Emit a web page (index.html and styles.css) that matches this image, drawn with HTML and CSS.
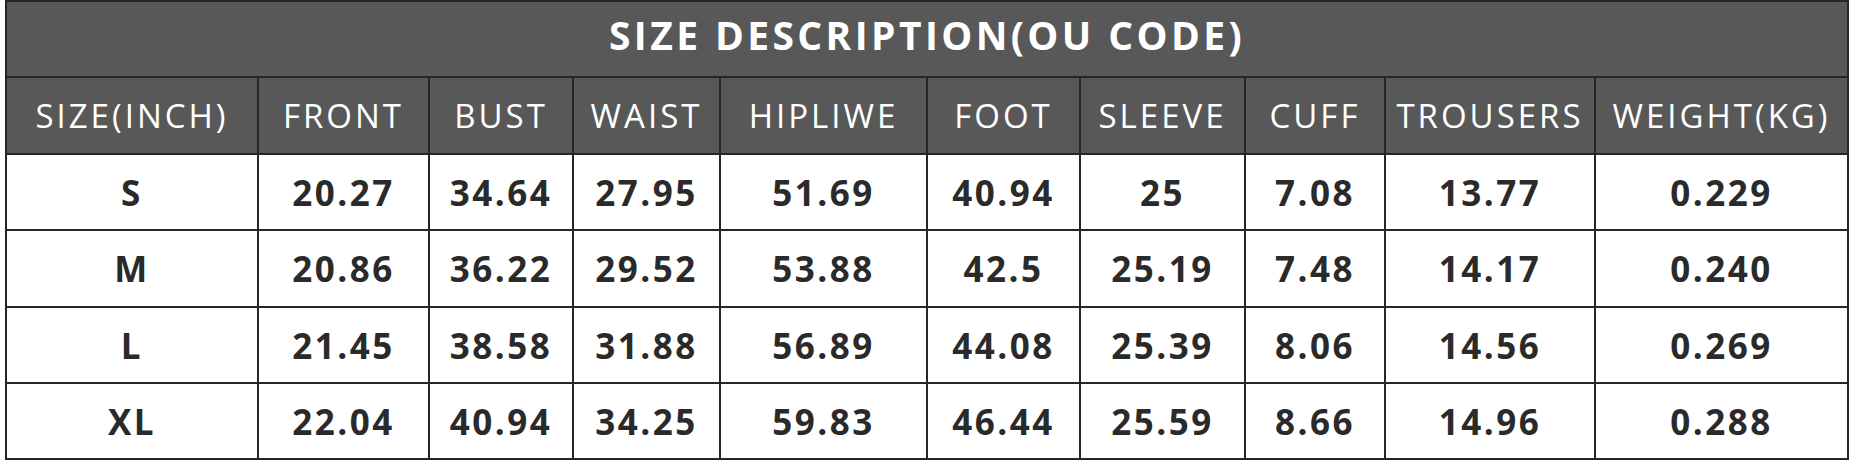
FILE: index.html
```html
<!DOCTYPE html>
<html lang="en">
<head>
<meta charset="utf-8">
<title>Size Description</title>
<link rel="stylesheet" href="styles.css">
</head>
<body>
<div class="chart">
  <div class="title">SIZE DESCRIPTION(OU CODE)</div>

  <div class="hd">SIZE(INCH)</div>
  <div class="hd">FRONT</div>
  <div class="hd">BUST</div>
  <div class="hd">WAIST</div>
  <div class="hd">HIPLIWE</div>
  <div class="hd">FOOT</div>
  <div class="hd">SLEEVE</div>
  <div class="hd">CUFF</div>
  <div class="hd">TROUSERS</div>
  <div class="hd">WEIGHT(KG)</div>

  <div class="cell">S</div>
  <div class="cell">20.27</div>
  <div class="cell">34.64</div>
  <div class="cell">27.95</div>
  <div class="cell">51.69</div>
  <div class="cell">40.94</div>
  <div class="cell">25</div>
  <div class="cell">7.08</div>
  <div class="cell">13.77</div>
  <div class="cell">0.229</div>

  <div class="cell">M</div>
  <div class="cell">20.86</div>
  <div class="cell">36.22</div>
  <div class="cell">29.52</div>
  <div class="cell">53.88</div>
  <div class="cell">42.5</div>
  <div class="cell">25.19</div>
  <div class="cell">7.48</div>
  <div class="cell">14.17</div>
  <div class="cell">0.240</div>

  <div class="cell">L</div>
  <div class="cell">21.45</div>
  <div class="cell">38.58</div>
  <div class="cell">31.88</div>
  <div class="cell">56.89</div>
  <div class="cell">44.08</div>
  <div class="cell">25.39</div>
  <div class="cell">8.06</div>
  <div class="cell">14.56</div>
  <div class="cell">0.269</div>

  <div class="cell">XL</div>
  <div class="cell">22.04</div>
  <div class="cell">40.94</div>
  <div class="cell">34.25</div>
  <div class="cell">59.83</div>
  <div class="cell">46.44</div>
  <div class="cell">25.59</div>
  <div class="cell">8.66</div>
  <div class="cell">14.96</div>
  <div class="cell">0.288</div>
</div>
</body>
</html>
```

FILE: styles.css
```css
html, body {
  margin: 0;
  padding: 0;
  background: #ffffff;
}

body {
  font-family: "Open Sans", "Noto Sans", sans-serif;
}

.chart {
  margin-left: 5px;
  width: 1844px;
  box-sizing: border-box;
  padding: 2px;
  background: #262626;
  display: grid;
  grid-template-columns: 250px 169px 142px 145px 205px 151px 163px 138px 208px 251px;
  grid-template-rows: 74px 75px 74px 75px 74px 74px;
  gap: 2px;
}

.title {
  grid-column: 1 / -1;
  background: #585858;
  color: #ffffff;
  font-weight: 700;
  font-size: 39px;
  letter-spacing: 3.4px;
  display: flex;
  align-items: center;
  justify-content: center;
  padding-bottom: 10px;
  box-sizing: border-box;
}

.hd {
  background: #585858;
  color: #ffffff;
  font-weight: 400;
  font-size: 33px;
  letter-spacing: 3px;
  display: flex;
  align-items: center;
  justify-content: center;
  white-space: nowrap;
}

.cell {
  background: #ffffff;
  color: #2a2a2a;
  font-weight: 700;
  font-size: 35px;
  letter-spacing: 2.5px;
  display: flex;
  align-items: center;
  justify-content: center;
  white-space: nowrap;
}
```
